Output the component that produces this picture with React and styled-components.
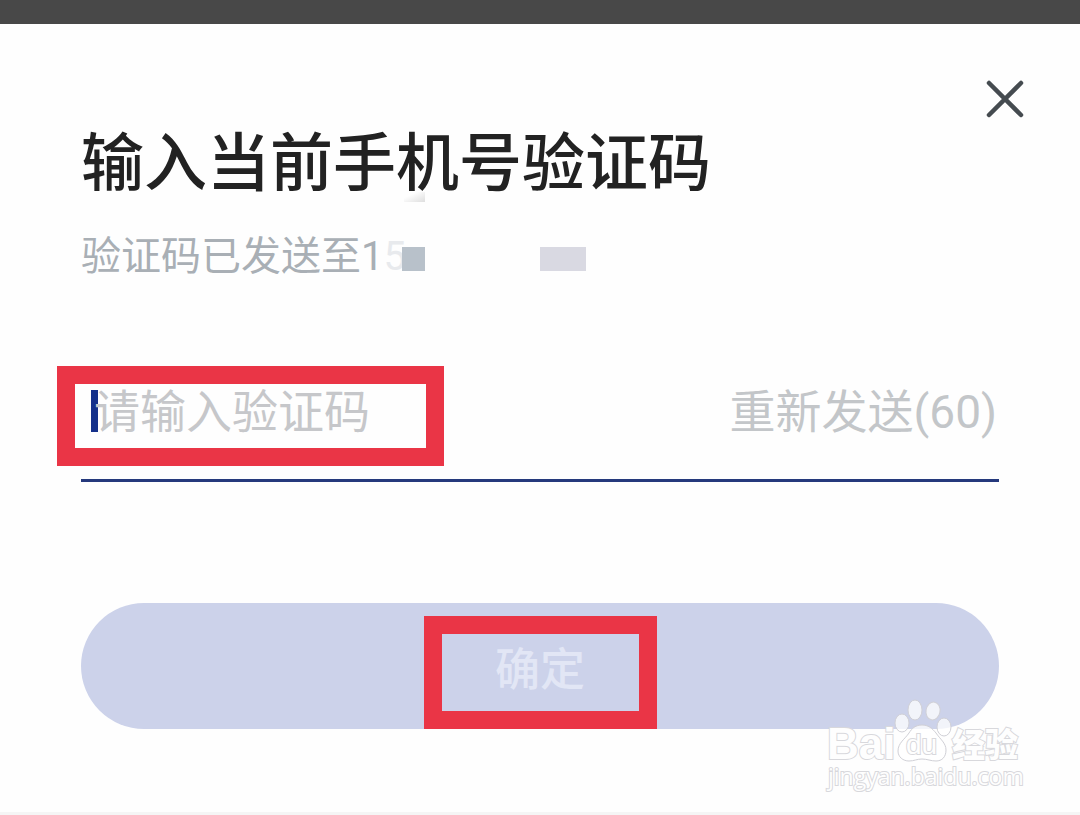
import React, { useState } from "react";
import styled, { createGlobalStyle } from "styled-components";

const App = () => {
  const [code, setCode] = useState("");
  return (
    <Page>
      <GlobalStyle />
      <Backdrop />
      <Sheet>
        <Header>
          <CloseButton type="button" aria-label="关闭">
            <svg width="38" height="38" viewBox="0 0 38 38" fill="none">
              <path
                d="M3 3L35 35M35 3L3 35"
                stroke="#454b50"
                strokeWidth="4.5"
                strokeLinecap="round"
              />
            </svg>
          </CloseButton>
        </Header>
        <Body>
          <Title>
            输入当前手机号验证码
            <Smudge />
          </Title>
          <SentTo>
            验证码已发送至1
            <FadedDigit>5</FadedDigit>
            <Mask $width={23} $color="#b8c1ca" />
            <MaskGap />
            <Mask $width={46} $color="#d9d9e2" />
          </SentTo>
          <CodeRow>
            <Entry>
              <Caret />
              <CodeInput
                aria-label="验证码"
                placeholder="请输入验证码"
                value={code}
                onChange={(e) => setCode(e.target.value)}
              />
              <EntryFrame />
            </Entry>
            <Resend type="button">重新发送(60)</Resend>
          </CodeRow>
          <Confirm type="button">
            确定
            <ConfirmFrame />
          </Confirm>
        </Body>
        <Watermark>
          <svg width="204" height="106" viewBox="0 0 204 106">
            <Mark x="3" y="65" $size={44} $weight={700}>
              Bai
            </Mark>
            <g fill="#fff" fillOpacity="0.75" stroke="#d0d0d6" strokeWidth="1">
              <ellipse cx="78" cy="29" rx="7" ry="9" />
              <ellipse cx="91" cy="16" rx="7" ry="10" />
              <ellipse cx="109" cy="17" rx="7" ry="9" transform="rotate(10 109 17)" />
              <ellipse cx="120" cy="33" rx="7" ry="9" />
              <path d="M98 31C92 31 88 34 85 39C81 45 74 49 74 57C74 63 79 67 85 67C90 67 93 65 98 65C103 65 107 67 112 67C118 67 122 63 122 56C122 49 116 45 112 39C108 34 104 31 98 31Z" />
            </g>
            <Mark x="82" y="60" $size={28}>
              du
            </Mark>
            <Mark x="128" y="63" $size={33} $weight={900}>
              经验
            </Mark>
            <Mark x="4" y="91" $size={23} $family="Open Sans">
              jingyan.baidu.com
            </Mark>
          </svg>
        </Watermark>
      </Sheet>
      <BottomEdge />
    </Page>
  );
};

export default App;

const GlobalStyle = createGlobalStyle`
  * {
    box-sizing: border-box;
  }
  body {
    margin: 0;
    background: #f5f5f5;
  }
  button,
  input {
    font-family: inherit;
    border: none;
    background: none;
    padding: 0;
    margin: 0;
  }
`;
const Page = styled.div`
  min-height: 100vh;
  display: flex;
  flex-direction: column;
  font-family: "Noto Sans CJK SC", sans-serif;
`;
const Backdrop = styled.div`
  height: 24px;
  background: #484848;
`;
const Sheet = styled.main`
  position: relative;
  flex: 1;
  background: #fefefe;
`;
const Header = styled.div`
  display: flex;
  justify-content: flex-end;
  padding: 50px 50px 0;
`;
const CloseButton = styled.button`
  width: 50px;
  height: 50px;
  display: flex;
  align-items: center;
  justify-content: center;
`;
const Body = styled.div`
  padding: 0 81px 83px;
`;
const Title = styled.h1`
  position: relative;
  margin: 0;
  font-size: 63px;
  font-weight: 500;
  line-height: 68px;
  color: #222;
`;
const Smudge = styled.span`
  position: absolute;
  left: 323px;
  top: 68px;
  width: 21px;
  height: 10px;
  background: linear-gradient(to top left, #dedede, rgba(254, 254, 254, 0) 70%);
`;
const SentTo = styled.p`
  display: flex;
  align-items: center;
  margin: 36px 0 0;
  font-family: Roboto, "Noto Sans CJK SC", sans-serif;
  font-size: 40px;
  line-height: 58px;
  color: #a9afb5;
`;
const FadedDigit = styled.span`
  margin-right: -4px;
  color: #e8eaed;
`;
const Mask = styled.span`
  position: relative;
  width: ${(props) => props.$width}px;
  height: 24px;
  margin-top: 4px;
  background: ${(props) => props.$color};
`;
const MaskGap = styled.span`
  width: 115px;
`;
const CodeRow = styled.div`
  display: flex;
  align-items: center;
  justify-content: space-between;
  margin-top: 80px;
  padding-bottom: 23px;
  border-bottom: 3px solid #25397c;
`;
const Entry = styled.div`
  position: relative;
  flex: 1;
  display: flex;
  align-items: center;
  height: 90px;
  padding-left: 10px;
`;
const Caret = styled.span`
  width: 7px;
  height: 42px;
  margin-right: -4px;
  background: #14308a;
`;
const CodeInput = styled.input`
  flex: 1;
  min-width: 0;
  height: 74px;
  && {
    padding-bottom: 6px;
  }
  font-size: 46px;
  color: #222;
  outline: none;
  &::placeholder {
    color: #c6c7ca;
    opacity: 1;
  }
`;
const Frame = styled.span`
  position: absolute;
  border: 18px solid #ea3546;
  pointer-events: none;
`;
const EntryFrame = styled(Frame)`
  top: 0;
  left: -24px;
  width: 387px;
  height: 100px;
`;
const Resend = styled.button`
  && {
    padding: 2px 2px 0 0;
  }
  font-family: Roboto, "Noto Sans CJK SC", sans-serif;
  font-size: 46px;
  line-height: 66px;
  color: #c3c6c9;
`;
const Confirm = styled.button`
  position: relative;
  display: block;
  width: 100%;
  height: 126px;
  && {
    margin-top: 121px;
  }
  border-radius: 63px;
  background: #ccd2ea;
  font-size: 45px;
  font-weight: 500;
  color: #e2e6f5;
`;
const ConfirmFrame = styled(Frame)`
  right: 0;
  bottom: 0;
  left: 0;
  width: 233px;
  height: 113px;
  margin: 0 auto;
`;
const Watermark = styled.div`
  position: absolute;
  right: 52px;
  bottom: 12px;
  svg {
    display: block;
  }
`;
const Mark = styled.text`
  font-family: ${(props) => props.$family || "Liberation Sans"},
    "Noto Sans CJK SC", sans-serif;
  font-size: ${(props) => props.$size}px;
  font-weight: ${(props) => props.$weight || 400};
  fill: #fefefe;
  stroke: #d8d8dc;
  stroke-width: 2px;
  paint-order: stroke;
`;
const BottomEdge = styled.div`
  height: 3px;
  background: #f5f5f5;
`;
